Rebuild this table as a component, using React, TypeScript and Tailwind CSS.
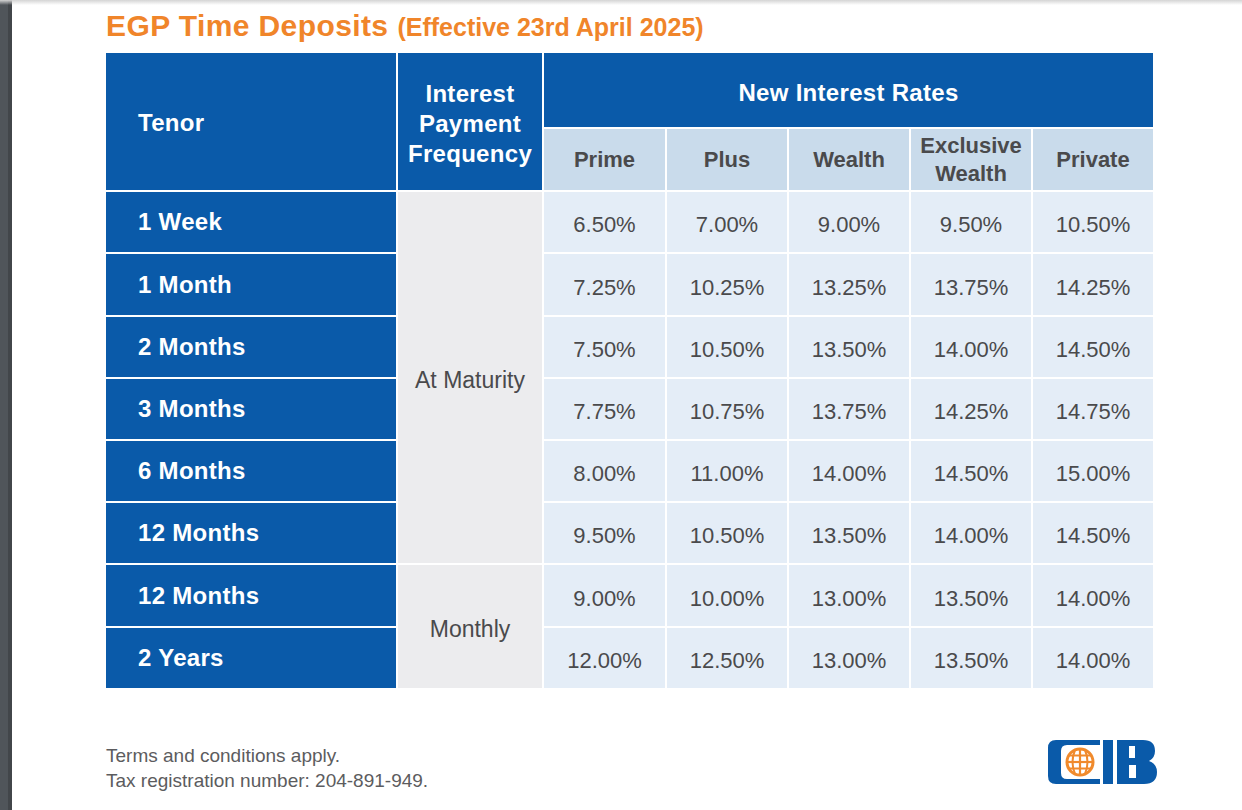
import React from "react";

const BLUE = "bg-[#0a5aa9]";

const rows: { tenor: string; rates: string[] }[] = [
  { tenor: "1 Week", rates: ["6.50%", "7.00%", "9.00%", "9.50%", "10.50%"] },
  { tenor: "1 Month", rates: ["7.25%", "10.25%", "13.25%", "13.75%", "14.25%"] },
  { tenor: "2 Months", rates: ["7.50%", "10.50%", "13.50%", "14.00%", "14.50%"] },
  { tenor: "3 Months", rates: ["7.75%", "10.75%", "13.75%", "14.25%", "14.75%"] },
  { tenor: "6 Months", rates: ["8.00%", "11.00%", "14.00%", "14.50%", "15.00%"] },
  { tenor: "12 Months", rates: ["9.50%", "10.50%", "13.50%", "14.00%", "14.50%"] },
  { tenor: "12 Months", rates: ["9.00%", "10.00%", "13.00%", "13.50%", "14.00%"] },
  { tenor: "2 Years", rates: ["12.00%", "12.50%", "13.00%", "13.50%", "14.00%"] },
];

function CibLogo() {
  return (
    <svg width="112" height="48" viewBox="0 0 112 48" aria-label="CIB">
      <path
        fillRule="evenodd"
        fill="#0a5aa9"
        d="M10 2 H54 V46 H10 Q2 46 2 38 V10 Q2 2 10 2 Z M21 7 Q15 7 15 13 V35 Q15 41 21 41 H54 V7 Z"
      />
      <circle cx="34" cy="24" r="13" fill="#ffffff" stroke="#f08a2c" strokeWidth="3" />
      <line x1="21" y1="24" x2="47" y2="24" stroke="#f08a2c" strokeWidth="2.2" />
      <line x1="23" y1="17.5" x2="45" y2="17.5" stroke="#f08a2c" strokeWidth="2" />
      <line x1="23" y1="30.5" x2="45" y2="30.5" stroke="#f08a2c" strokeWidth="2" />
      <line x1="34" y1="11" x2="34" y2="37" stroke="#f08a2c" strokeWidth="2.2" />
      <path d="M29 12 Q24 24 29 36" fill="none" stroke="#f08a2c" strokeWidth="2" />
      <path d="M39 12 Q44 24 39 36" fill="none" stroke="#f08a2c" strokeWidth="2" />
      <rect x="57" y="2" width="10" height="44" fill="#0a5aa9" />
      <path
        fillRule="evenodd"
        fill="#0a5aa9"
        d="M71 2 H97 Q109 2 109 13 Q109 20 103 23 Q111 26 111 34 Q111 46 98 46 H71 Z M83 8 V20 H89 V8 Z M83 27 V40 H90 V27 Z"
      />
    </svg>
  );
}

export default function App() {
  const headText = "text-white font-bold text-[24px] leading-[30px] tracking-[0.3px]";
  const subText = "text-[#4a4a4c] font-bold text-[22px] leading-[28px]";
  const rateText = "text-[#4a4a4c] text-[22px] pt-[5px]";
  return (
    <div
      className="relative flex w-[1242px] h-[810px] bg-white overflow-hidden"
      style={{ fontFamily: '"Liberation Sans", Arial, sans-serif' }}
    >
      <div className="absolute left-0 right-0 top-0 h-[5px] bg-gradient-to-b from-[#d4d4d4] to-transparent" />
      <div className="flex h-full">
        <div className="w-[8px] h-full bg-[#50555a]" />
        <div className="w-[4px] h-full bg-[#42464a]" />
      </div>
      <div className="flex flex-col pl-[94px] pt-[6px]">
        <div className="h-[40px] leading-[40px] whitespace-nowrap text-[#f0852a] font-bold">
          <span className="text-[30px] tracking-[0.4px]">EGP Time Deposits</span>
          <span className="text-[25px] ml-[9px]">(Effective 23rd April 2025)</span>
        </div>

        <div
          className="mt-[7px] grid w-[1047px] gap-[2px] bg-white"
          style={{
            gridTemplateColumns: "290px 144px 121px 120px 120px 120px 120px",
            gridTemplateRows: "74px 61px 60px 61px 60px 60px 60px 60px 61px 60px",
          }}
        >
          <div className={`${BLUE} row-span-2 flex items-center pl-[32px] pt-[2px] ${headText}`}>Tenor</div>
          <div className={`${BLUE} row-span-2 flex items-center justify-center text-center pt-[4px] ${headText}`}>
            Interest
            <br />
            Payment
            <br />
            Frequency
          </div>
          <div className={`${BLUE} col-span-5 flex items-center justify-center pt-[5px] ${headText}`}>
            New Interest Rates
          </div>
          {["Prime", "Plus", "Wealth", "Exclusive Wealth", "Private"].map((h) => (
            <div key={h} className={`bg-[#c9dbeb] flex items-center justify-center text-center px-[4px] ${subText}`}>
              {h === "Exclusive Wealth" ? (
                <span>
                  Exclusive
                  <br />
                  Wealth
                </span>
              ) : (
                h
              )}
            </div>
          ))}

          {rows.map((r, i) => (
            <React.Fragment key={i}>
              <div className={`${BLUE} flex items-center pl-[32px] text-white font-bold text-[24px] tracking-[0.3px]`}>
                {r.tenor}
              </div>
              {i === 0 && (
                <div className="row-span-6 bg-[#ececee] flex items-center justify-center pt-[6px] text-[#4a4a4c] text-[23px]">
                  At Maturity
                </div>
              )}
              {i === 6 && (
                <div className="row-span-2 bg-[#ececee] flex items-center justify-center pt-[6px] text-[#4a4a4c] text-[23px]">
                  Monthly
                </div>
              )}
              {r.rates.map((v, j) => (
                <div key={j} className={`bg-[#e4edf7] flex items-center justify-center ${rateText}`}>
                  {v}
                </div>
              ))}
            </React.Fragment>
          ))}
        </div>

        <div className="mt-[50px] flex w-[1052px] items-start justify-between">
          <div className="pt-[5px] text-[19px] leading-[25px] text-[#5c5c5e]">
            <div>Terms and conditions apply.</div>
            <div>Tax registration number: 204-891-949.</div>
          </div>
          <CibLogo />
        </div>
      </div>
    </div>
  );
}
